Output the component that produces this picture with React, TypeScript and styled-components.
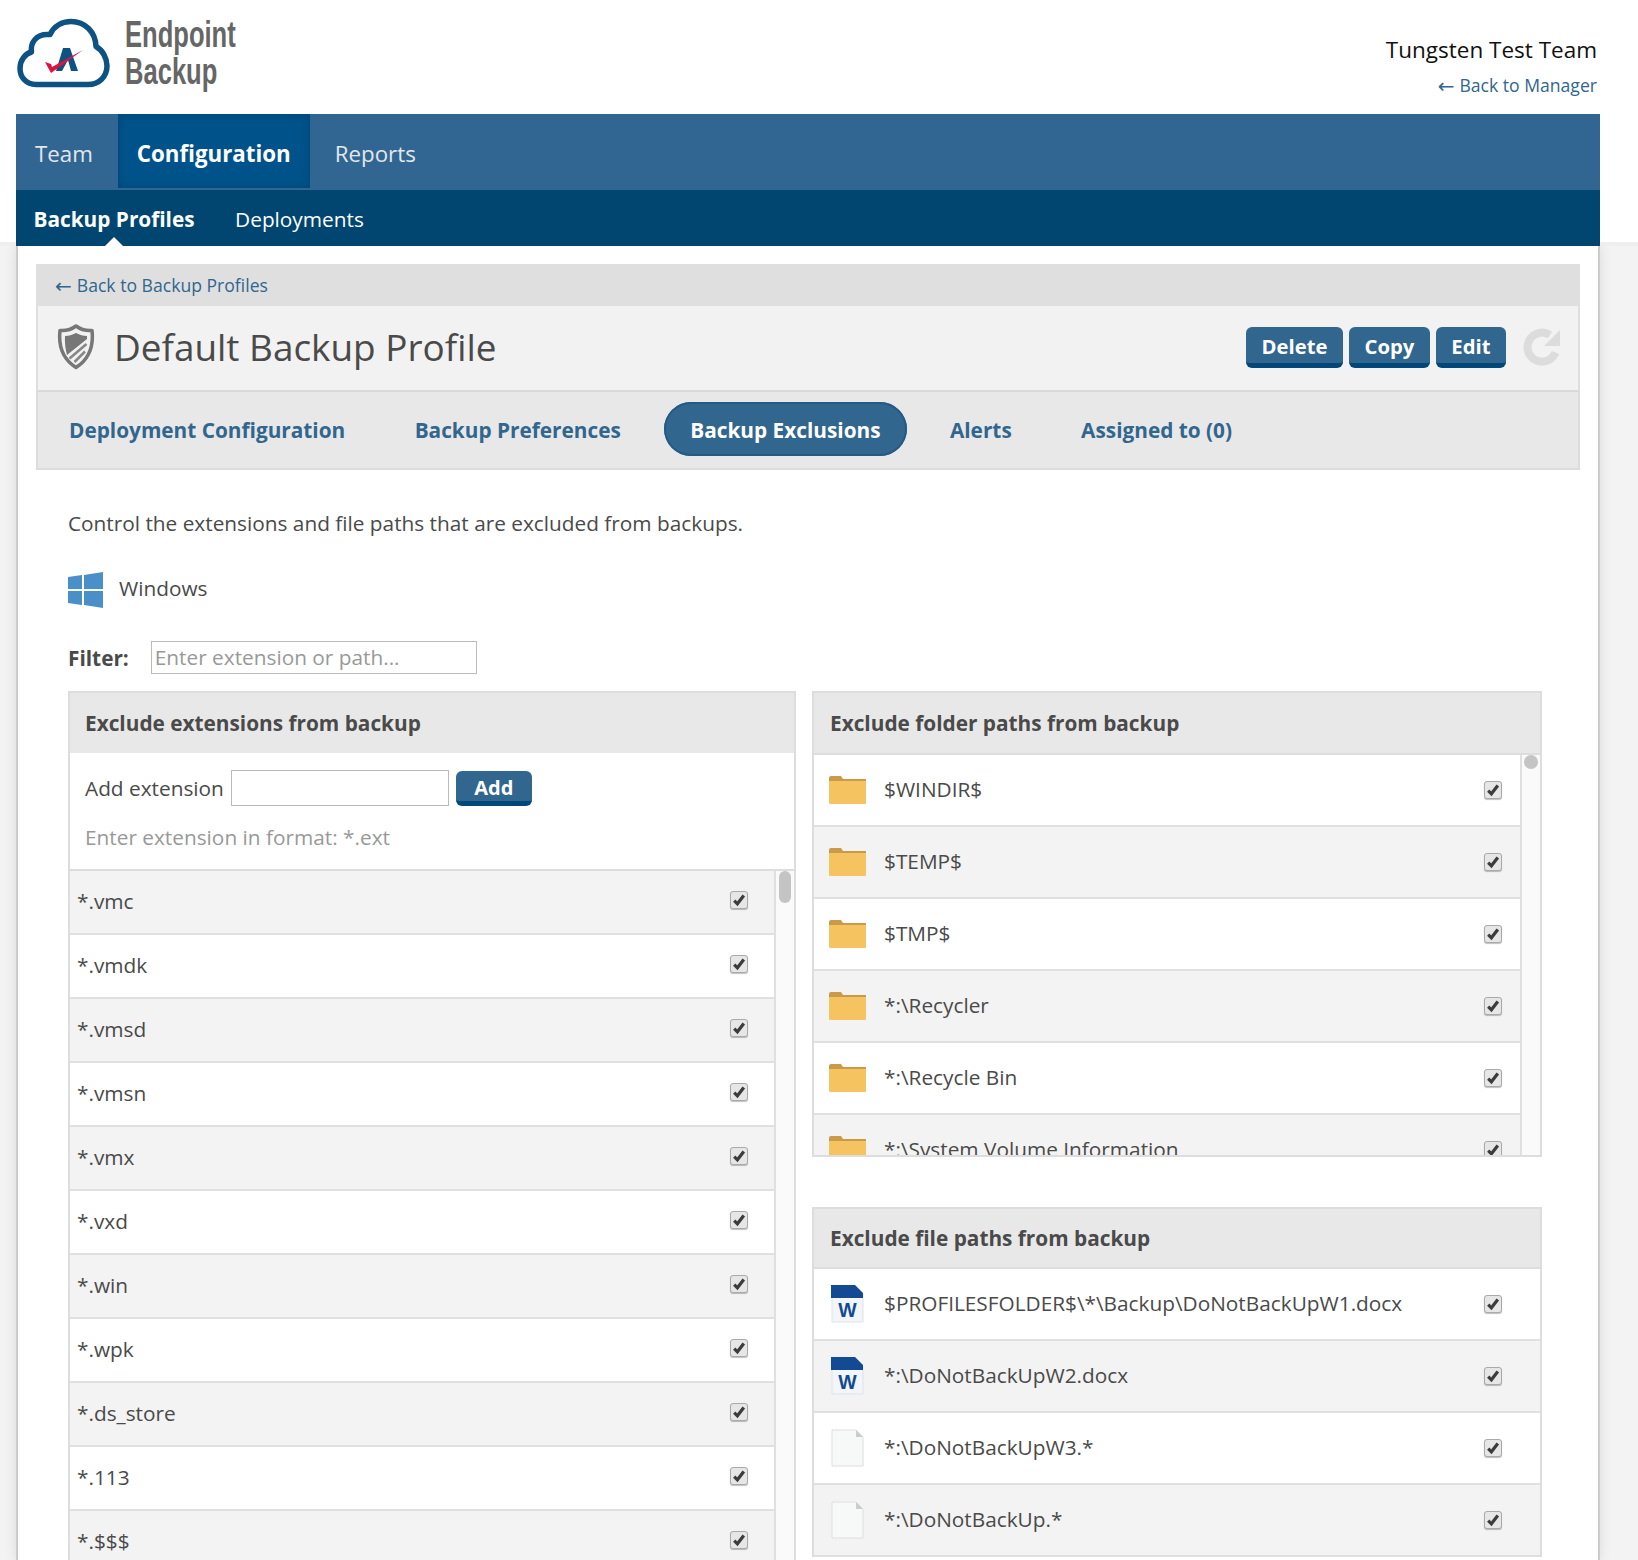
import React from "react";
import styled, { createGlobalStyle } from "styled-components";

const GlobalStyle = createGlobalStyle`
  html, body { margin: 0; padding: 0; height: 1560px; overflow: hidden; background: #fff; }
  * { box-sizing: border-box; }
  body { font-family: "Open Sans", "Liberation Sans", sans-serif; font-size: 20.8px; color: #4a4a4a; }
`;

const Page = styled.div`
  height: 1560px;
  overflow: hidden;
  padding: 0 38px 0 16px;
  background: linear-gradient(to bottom, #fff 242px, #eee 242px, #eee 246px, #f3f3f3 246px);
`;

const Header = styled.header`
  height: 114px;
  margin: 0 -38px 0 -16px;
  padding: 0 41px 0 16px;
  background: #fff;
  display: flex;
  justify-content: space-between;
`;

const Logo = styled.div`
  display: flex;
  align-items: flex-start;
  gap: 13px;
`;

const LogoWords = styled.div`
  padding-top: 16px;
  font-family: "Liberation Sans", sans-serif;
  font-weight: 700;
  font-size: 36px;
  line-height: 37px;
  color: #666;
  transform: scaleX(0.71);
  transform-origin: left top;
`;

const Account = styled.div`
  padding-top: 33px;
  text-align: right;
`;

const TeamName = styled.div`
  font-size: 22.5px;
  line-height: 34px;
  color: #111;
`;

const BackLink = styled.a`
  display: flex;
  justify-content: flex-end;
  align-items: center;
  gap: 5px;
  font-size: 17.6px;
  line-height: 36px;
  color: #31668f;
`;

const Arrow = styled.span`
  font-family: "DejaVu Sans", sans-serif;
  font-size: 20px;
  line-height: 1;
  padding-top: 2px;
`;

const Nav = styled.nav`
  height: 76px;
  background: #316692;
  display: flex;
  gap: 6px;
`;

const NavItem = styled.a<{ $active?: boolean }>`
  height: 74px;
  padding: 4px 19px 0;
  display: flex;
  align-items: center;
  font-size: 22.3px;
  font-weight: ${(p) => (p.$active ? 700 : 400)};
  color: ${(p) => (p.$active ? "#fff" : "#e2e7ec")};
  background: ${(p) => (p.$active ? "#00538a" : "transparent")};
  box-shadow: ${(p) => (p.$active ? "inset 0 0 8px rgba(0,50,90,.45)" : "none")};
`;

const SubNav = styled.nav`
  height: 56px;
  background: #004671;
  display: flex;
  gap: 40.5px;
  padding-left: 17.5px;
`;

const SubItem = styled.a<{ $active?: boolean }>`
  position: relative;
  display: flex;
  align-items: center;
  padding-top: 2px;
  font-size: 20.8px;
  font-weight: ${(p) => (p.$active ? 700 : 400)};
  color: #fff;
  ${(p) =>
    p.$active &&
    `&::after {
      content: "";
      position: absolute;
      left: 71px;
      bottom: 0;
      border: 9px solid transparent;
      border-top: 0;
      border-bottom-color: #fff;
    }`}
`;

const Sheet = styled.main`
  height: 1314px;
  background: #fff;
  border-left: 2px solid #ccc;
  border-right: 2px solid #ccc;
  padding: 18px 18px 0;
  box-shadow: 0 0 12px rgba(0, 0, 0, 0.1);
  clip-path: inset(0 -24px 0 -24px);
`;

const Crumb = styled.div`
  height: 42px;
  padding-left: 19px;
  display: flex;
  align-items: center;
  gap: 5px;
  background: #dfdfdf;
  font-size: 17.6px;
  color: #31668f;
`;

const TitleBar = styled.div`
  height: 86px;
  padding: 0 17px 2px 19px;
  display: flex;
  align-items: center;
  background: #f2f2f2;
  border-left: 2px solid #dfdfdf;
  border-right: 2px solid #dfdfdf;
  border-bottom: 2px solid #d9d9d9;
`;

const Title = styled.h1`
  flex: 1;
  margin: 0 0 0 19px;
  font-size: 36.9px;
  font-weight: 400;
  color: #4a4a4a;
`;

const ActionButton = styled.button`
  height: 41px;
  padding: 2px 15.5px 0;
  margin-left: 6px;
  border: 0;
  border-bottom: 5px solid #00477a;
  border-radius: 6px;
  background: #31668f;
  color: #fff;
  font-family: inherit;
  font-size: 20.3px;
  font-weight: 700;
`;

const RefreshIcon = styled.svg`
  flex: none;
  width: 38px;
  height: 38px;
  margin-left: 17px;
`;

const TabBar = styled.div`
  height: 78px;
  padding: 10px 0 0 5px;
  display: flex;
  align-items: flex-start;
  gap: 17.4px;
  background: #e8e8e8;
  border: 2px solid #dcdcdc;
  border-top: 0;
`;

const Tab = styled.a<{ $active?: boolean }>`
  height: 54px;
  padding: 2px 26px 0;
  display: flex;
  align-items: center;
  border-radius: 27px;
  font-size: 20.8px;
  font-weight: 700;
  color: ${(p) => (p.$active ? "#fff" : "#31668f")};
  background: ${(p) => (p.$active ? "#31668f" : "transparent")};
  box-shadow: ${(p) => (p.$active ? "inset 0 0 0 2px #235a86" : "none")};
`;

const Section = styled.section`
  padding: 39px 38px 0 32px;
`;

const Intro = styled.p`
  margin: 0;
  line-height: 28px;
`;

const OsRow = styled.div`
  margin-top: 35px;
  height: 36px;
  display: flex;
  align-items: center;
  gap: 16px;
`;

const OsName = styled.span`
  padding-bottom: 4px;
`;

const FilterRow = styled.label`
  margin-top: 33px;
  height: 33px;
  display: flex;
  align-items: center;
  gap: 22px;
  font-weight: 700;
`;

const TextField = styled.input<{ $w: number }>`
  width: ${(p) => p.$w}px;
  height: 100%;
  padding: 0 3px 2px;
  border: 1px solid #bbb;
  border-radius: 0;
  outline: 0;
  background: #fff;
  font-family: inherit;
  font-size: 20.8px;
  color: #4a4a4a;
  &::placeholder { color: #999; opacity: 1; }
`;

const Columns = styled.div`
  margin-top: 17px;
  display: grid;
  grid-template-columns: 728px 730px;
  gap: 16px;
  align-items: start;
`;

const Stack = styled.div`
  display: flex;
  flex-direction: column;
  gap: 50px;
`;

const Panel = styled.div<{ $h?: number }>`
  height: ${(p) => (p.$h ? `${p.$h}px` : "auto")};
  overflow: hidden;
  background: #fff;
  border: 2px solid #ddd;
  border-bottom-width: ${(p) => (p.$h === 466 ? 2 : 0)}px;
  display: flex;
  flex-direction: column;
`;

const PanelHead = styled.h2<{ $h: number; $line?: boolean; $inset?: number }>`
  flex: none;
  height: ${(p) => p.$h}px;
  margin: 0;
  padding: 0 ${(p) => p.$inset ?? 15}px;
  display: flex;
  align-items: center;
  background: #e8e8e8;
  border-bottom: ${(p) => (p.$line ? "2px solid #ddd" : "0")};
  font-size: 20.8px;
  font-weight: 700;
  color: #4a4a4a;
`;

const AddForm = styled.div`
  flex: none;
  height: 118px;
  padding: 17px 15px 0;
  border-bottom: 2px solid #ddd;
`;

const AddLine = styled.div`
  height: 36px;
  display: flex;
  align-items: center;
  gap: 7px;
`;

const AddButton = styled.button`
  width: 76px;
  height: 35px;
  margin-top: 1px;
  padding: 3px 0 0;
  border: 0;
  border-bottom: 5px solid #00477a;
  border-radius: 6px;
  background: #31668f;
  color: #fff;
  font-family: inherit;
  font-size: 20px;
  font-weight: 700;
`;

const Hint = styled.div`
  margin-top: 17px;
  line-height: 28px;
  color: #999;
`;

const ScrollArea = styled.div`
  display: flex;
  align-items: stretch;
  min-height: 0;
`;

const Rows = styled.div`
  flex: 1;
  min-width: 0;
`;

const Track = styled.div`
  flex: none;
  width: 20px;
  background: #fafafa;
  border-left: 2px solid #e0e0e0;
  padding: 0 2px;
`;

const Thumb = styled.div<{ $h: number }>`
  height: ${(p) => p.$h}px;
  width: ${(p) => (p.$h > 20 ? 12 : 14)}px;
  margin: 0 auto;
  border-radius: 7px;
  background: #c4c4c4;
`;

const ExtRow = styled.div<{ $shaded: boolean }>`
  height: 64px;
  padding: 0 26px 2px 7px;
  display: flex;
  align-items: center;
  justify-content: space-between;
  background: ${(p) => (p.$shaded ? "#f3f3f3" : "#fff")};
  border-bottom: 2px solid #e0e0e0;
`;

const PathRow = styled.div<{ $shaded: boolean; $pad: number }>`
  height: 72px;
  flex: none;
  padding: 0 ${(p) => p.$pad}px 2px 15px;
  display: flex;
  align-items: center;
  background: ${(p) => (p.$shaded ? "#f3f3f3" : "#fff")};
  border-bottom: 2px solid #e0e0e0;
`;

const IconSlot = styled.span<{ $inset?: number }>`
  flex: none;
  width: 55px;
  padding-top: 2px;
  padding-left: ${(p) => p.$inset ?? 0}px;
  display: flex;
  align-items: center;
`;

const PathText = styled.span`
  flex: 1;
  white-space: nowrap;
`;

const Box = styled.span<{ $nudge: number }>`
  flex: none;
  width: 18px;
  height: 18px;
  margin-top: ${(p) => p.$nudge}px;
  display: flex;
  align-items: center;
  justify-content: center;
  background: #e6e6e6;
  border: 1px solid #aaa;
  border-radius: 3px;
  box-shadow: 0 1px 1px rgba(0, 0, 0, 0.25);
`;

const Check = ({ nudge }: { nudge: number }) => (
  <Box $nudge={nudge}>
    <svg width="14" height="14" viewBox="0 0 14 14">
      <path d="M2.2 7.6 L5.4 10.8 L11.8 2.6" fill="none" stroke="#3c3c3c" strokeWidth="3.2" />
    </svg>
  </Box>
);

const CloudLogo = () => (
  <svg width="96" height="90" viewBox="16 0 96 90" style={{ flex: "none" }}>
    <path
      d="M36 84.5 C26 84.5 20 77 20 68.5 C20 60 25 54 31.5 52 C30 42 37 34.5 47 34.5 L50 34.5 C54 26 62 21.5 71 21.5 C85 21.5 95.5 32 96 46.5 C102.5 50 107 58 107 66 C107 76.5 99 84.5 88 84.5 Z"
      fill="#fff"
      stroke="#0c5383"
      strokeWidth="5.5"
      strokeLinejoin="round"
    />
    <path d="M56 71 L63 48 L70 48 L78 71 L71 71 L68 60 L62 71 Z" fill="#0c5383" />
    <path d="M45 62 L51 64 L52 67 L83 50 L51 73 Z" fill="#e0123f" />
  </svg>
);

const ShieldIcon = () => (
  <svg width="38" height="46" viewBox="0 0 38 46" style={{ flex: "none" }}>
    <path
      d="M19 2 C23 5 28 7 35 6.5 C36.5 20 34 34 19 43.5 C4 34 1.5 20 3 6.5 C10 7 15 5 19 2 Z"
      fill="#f2f2f2"
      stroke="#777"
      strokeWidth="3.5"
      strokeLinejoin="round"
    />
    <path d="M19 9 C23 11 26 12 30 12 L30 15 L10 31 C8.5 25 7.5 19 8 12 C12 12 15 11 19 9 Z" fill="#777" />
    <path d="M12.5 34.5 L29.5 20 M17.5 38 L28 27.5" stroke="#888" strokeWidth="2.6" />
  </svg>
);

const WindowsIcon = () => (
  <svg width="35" height="36" viewBox="0 0 35 36" style={{ flex: "none" }}>
    <g fill="#4b8fc9">
      <polygon points="0,5 14,3 14,17 0,17" />
      <polygon points="16,3 35,0 35,17 16,17" />
      <polygon points="0,19 14,19 14,33 0,31" />
      <polygon points="16,19 35,19 35,36 16,33" />
    </g>
  </svg>
);

const FolderIcon = () => (
  <svg width="38" height="28" viewBox="0 0 38 28">
    <path d="M0 2 Q0 0 2 0 L12 0 L14 3 L37 3 L37 10 L0 10 Z" fill="#c99a4a" />
    <path d="M0 5 L37 5 L37 27 Q37 28 36 28 L2 28 Q0 28 0 27 Z" fill="#f5c35f" />
  </svg>
);

const WordIcon = () => (
  <svg width="33" height="38" viewBox="0 0 33 38">
    <path d="M1 2 L23 0 L32 9 L32 37 L1 37 Z" fill="#f3f6f8" stroke="#dfe3e6" strokeWidth="1" />
    <path d="M0 0 L24 0 L32 8 L32 13 L0 13 Z" fill="#134a94" />
    <text x="16.5" y="31.5" textAnchor="middle" fontFamily="Liberation Sans, sans-serif" fontWeight="700" fontSize="19.5" fill="#134a94">
      W
    </text>
  </svg>
);

const BlankIcon = () => (
  <svg width="33" height="38" viewBox="0 0 33 38">
    <path d="M1 1 L25 1 L32 8 L32 37 L1 37 Z" fill="#f7f9f9" stroke="#dedede" strokeWidth="1" />
    <path d="M25 1 L32 8 L25 8 Z" fill="#ccc" />
  </svg>
);

const extensions = ["*.vmc", "*.vmdk", "*.vmsd", "*.vmsn", "*.vmx", "*.vxd", "*.win", "*.wpk", "*.ds_store", "*.113", "*.$$$"];
const folders = ["$WINDIR$", "$TEMP$", "$TMP$", "*:\\Recycler", "*:\\Recycle Bin", "*:\\System Volume Information"];
const files: { name: string; word: boolean }[] = [
  { name: "$PROFILESFOLDER$\\*\\Backup\\DoNotBackUpW1.docx", word: true },
  { name: "*:\\DoNotBackUpW2.docx", word: true },
  { name: "*:\\DoNotBackUpW3.*", word: false },
  { name: "*:\\DoNotBackUp.*", word: false },
];
const tabs = ["Deployment Configuration", "Backup Preferences", "Backup Exclusions", "Alerts", "Assigned to (0)"];

export default function App() {
  return (
    <Page>
      <GlobalStyle />
      <Header>
        <Logo>
          <CloudLogo />
          <LogoWords>
            Endpoint
            <br />
            Backup
          </LogoWords>
        </Logo>
        <Account>
          <TeamName>Tungsten Test Team</TeamName>
          <BackLink>
            <Arrow>←</Arrow>
            Back to Manager
          </BackLink>
        </Account>
      </Header>
      <Nav>
        <NavItem>Team</NavItem>
        <NavItem $active>Configuration</NavItem>
        <NavItem>Reports</NavItem>
      </Nav>
      <SubNav>
        <SubItem $active>Backup Profiles</SubItem>
        <SubItem>Deployments</SubItem>
      </SubNav>
      <Sheet>
        <Crumb>
          <Arrow>←</Arrow>
          Back to Backup Profiles
        </Crumb>
        <TitleBar>
          <ShieldIcon />
          <Title>Default Backup Profile</Title>
          <ActionButton>Delete</ActionButton>
          <ActionButton>Copy</ActionButton>
          <ActionButton>Edit</ActionButton>
          <RefreshIcon viewBox="0 0 38 38">
            <path d="M32.5 24.5 A14.5 14.5 0 1 1 27 7" fill="none" stroke="#dcdcdc" strokeWidth="8" />
            <polygon points="37,2 37,18 21,18" fill="#dcdcdc" />
          </RefreshIcon>
        </TitleBar>
        <TabBar>
          {tabs.map((t) => (
            <Tab key={t} $active={t === "Backup Exclusions"}>
              {t}
            </Tab>
          ))}
        </TabBar>
        <Section>
          <Intro>Control the extensions and file paths that are excluded from backups.</Intro>
          <OsRow>
            <WindowsIcon />
            <OsName>Windows</OsName>
          </OsRow>
          <FilterRow>
            Filter:
            <TextField $w={326} placeholder="Enter extension or path..." />
          </FilterRow>
          <Columns>
            <Panel>
              <PanelHead $h={60}>Exclude extensions from backup</PanelHead>
              <AddForm>
                <AddLine>
                  Add extension
                  <TextField $w={218} />
                  <AddButton>Add</AddButton>
                </AddLine>
                <Hint>Enter extension in format: *.ext</Hint>
              </AddForm>
              <ScrollArea>
                <Rows>
                  {extensions.map((e, i) => (
                    <ExtRow key={e} $shaded={i % 2 === 0}>
                      {e}
                      <Check nudge={-3} />
                    </ExtRow>
                  ))}
                </Rows>
                <Track>
                  <Thumb $h={32} />
                </Track>
              </ScrollArea>
            </Panel>
            <Stack>
              <Panel $h={466}>
                <PanelHead $h={62} $line $inset={16}>
                  Exclude folder paths from backup
                </PanelHead>
                <ScrollArea>
                  <Rows>
                    {folders.map((f, i) => (
                      <PathRow key={f} $shaded={i % 2 === 1} $pad={18}>
                        <IconSlot>
                          <FolderIcon />
                        </IconSlot>
                        <PathText>{f}</PathText>
                        <Check nudge={1} />
                      </PathRow>
                    ))}
                  </Rows>
                  <Track>
                    <Thumb $h={14} />
                  </Track>
                </ScrollArea>
              </Panel>
              <Panel>
                <PanelHead $h={60} $line $inset={16}>
                  Exclude file paths from backup
                </PanelHead>
                {files.map((f, i) => (
                  <PathRow key={f.name} $shaded={i % 2 === 1} $pad={38}>
                    <IconSlot $inset={2}>{f.word ? <WordIcon /> : <BlankIcon />}</IconSlot>
                    <PathText>{f.name}</PathText>
                    <Check nudge={1} />
                  </PathRow>
                ))}
              </Panel>
            </Stack>
          </Columns>
        </Section>
      </Sheet>
    </Page>
  );
}
